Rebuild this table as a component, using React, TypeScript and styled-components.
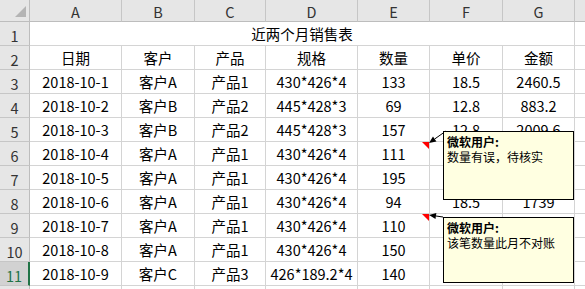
import React from "react";
import styled, { createGlobalStyle } from "styled-components";

const GlobalStyle = createGlobalStyle`
  html, body {
    margin: 0;
    padding: 0;
    background: #ffffff;
    overflow: hidden;
  }
  body {
    font-family: "Noto Sans CJK SC", "Noto Sans", sans-serif;
  }
`;

const COLS = [30, 92, 73, 71, 92, 72, 73, 72, 72];
const LETTERS = ["A", "B", "C", "D", "E", "F", "G", "H"];

const rows: string[][] = [
  ["日期", "客户", "产品", "规格", "数量", "单价", "金额"],
  ["2018-10-1", "客户A", "产品1", "430*426*4", "133", "18.5", "2460.5"],
  ["2018-10-2", "客户B", "产品2", "445*428*3", "69", "12.8", "883.2"],
  ["2018-10-3", "客户B", "产品2", "445*428*3", "157", "12.8", "2009.6"],
  ["2018-10-4", "客户A", "产品1", "430*426*4", "111", "", ""],
  ["2018-10-5", "客户A", "产品1", "430*426*4", "195", "", ""],
  ["2018-10-6", "客户A", "产品1", "430*426*4", "94", "18.5", "1739"],
  ["2018-10-7", "客户A", "产品1", "430*426*4", "110", "", ""],
  ["2018-10-8", "客户A", "产品1", "430*426*4", "150", "", ""],
  ["2018-10-9", "客户C", "产品3", "426*189.2*4", "140", "", ""],
];

const Sheet = styled.div`
  position: relative;
  width: 585px;
  height: 289px;
  overflow: hidden;
`;

const Grid = styled.div`
  display: grid;
  grid-template-columns: ${COLS.map((c) => c + "px").join(" ")};
  grid-template-rows: 22px repeat(12, 24px);
`;

const Corner = styled.div`
  background: #e6e6e6;
  border-right: 1px solid #bdbdbd;
  border-bottom: 1px solid #bdbdbd;
  display: flex;
  align-items: flex-end;
  justify-content: flex-end;
  padding: 0 3px 4px 0;
  box-sizing: border-box;
`;

const ColHead = styled.div`
  background: #e6e6e6;
  border-right: 1px solid #c6c6c6;
  border-bottom: 1px solid #bdbdbd;
  color: #333;
  font-size: 14.5px;
  display: flex;
  align-items: center;
  justify-content: center;
  padding-top: 2px;
  box-sizing: border-box;
`;

const RowHead = styled.div<{ $active?: boolean }>`
  background: ${(p) => (p.$active ? "#d2d2d2" : "#e6e6e6")};
  border-right: ${(p) => (p.$active ? "2px solid #217346" : "1px solid #bdbdbd")};
  border-bottom: 1px solid #c6c6c6;
  color: ${(p) => (p.$active ? "#217346" : "#333")};
  font-size: 14.5px;
  display: flex;
  align-items: flex-end;
  justify-content: center;
  line-height: 1;
  padding-bottom: 2px;
  box-sizing: border-box;
`;

const Cell = styled.div`
  border-right: 1px solid #d4d4d4;
  border-bottom: 1px solid #d4d4d4;
  color: #000;
  font-size: 14.5px;
  line-height: 1;
  display: flex;
  align-items: flex-end;
  justify-content: center;
  padding-bottom: 4px;
  box-sizing: border-box;
  white-space: nowrap;
  overflow: visible;
`;

const TitleCell = styled(Cell)`
  grid-column: span 7;
`;

const Note = styled.div<{ $top: number; $height: number }>`
  position: absolute;
  left: 443px;
  top: ${(p) => p.$top}px;
  width: 131px;
  height: ${(p) => p.$height}px;
  box-sizing: border-box;
  background: #ffffe1;
  border: 1px solid #000;
  padding: 2px 3px;
  font-size: 12px;
  line-height: 15px;
  color: #000;
`;

const Author = styled.b`
  font-weight: 700;
`;

const Marker = styled.svg`
  position: absolute;
  left: 0;
  top: 0;
  pointer-events: none;
`;

const CornerMark = () => (
  <svg width="11" height="11" viewBox="0 0 11 11">
    <polygon points="11,0 11,11 0,11" fill="#b4b4b4" />
  </svg>
);

const Arrow = ({ x1, y1, x2, y2 }: { x1: number; y1: number; x2: number; y2: number }) => {
  const a = Math.atan2(y2 - y1, x2 - x1);
  const l = 7;
  const w = 3;
  const bx = x2 - l * Math.cos(a);
  const by = y2 - l * Math.sin(a);
  const px = -Math.sin(a) * w;
  const py = Math.cos(a) * w;
  return (
    <g>
      <line x1={x1} y1={y1} x2={bx} y2={by} stroke="#000" strokeWidth="1" />
      <polygon
        points={`${x2},${y2} ${bx + px},${by + py} ${bx - px},${by - py}`}
        fill="#000"
      />
    </g>
  );
};

export default function App() {
  return (
    <Sheet>
      <GlobalStyle />
      <Grid>
        <Corner>
          <CornerMark />
        </Corner>
        {LETTERS.map((l) => (
          <ColHead key={l}>{l}</ColHead>
        ))}

        <RowHead>1</RowHead>
        <TitleCell>近两个月销售表</TitleCell>
        <Cell />

        {rows.map((r, i) => (
          <React.Fragment key={i}>
            <RowHead $active={i + 2 === 11}>{i + 2}</RowHead>
            {r.map((v, j) => (
              <Cell key={j}>{v}</Cell>
            ))}
            <Cell />
          </React.Fragment>
        ))}

        <RowHead>12</RowHead>
        {LETTERS.map((l) => (
          <Cell key={l} />
        ))}
      </Grid>

      <Marker width="585" height="289">
        <polygon points="422,142 429,142 429,149" fill="#ff0000" />
        <polygon points="422,214 429,214 429,221" fill="#ff0000" />
        <Arrow x1={446} y1={131} x2={429} y2={143} />
        <Arrow x1={443} y1={217} x2={429} y2={215} />
      </Marker>

      <Note $top={131} $height={69}>
        <Author>微软用户:</Author>
        <div>数量有误，待核实</div>
      </Note>
      <Note $top={217} $height={66}>
        <Author>微软用户:</Author>
        <div>该笔数量此月不对账</div>
      </Note>
    </Sheet>
  );
}
